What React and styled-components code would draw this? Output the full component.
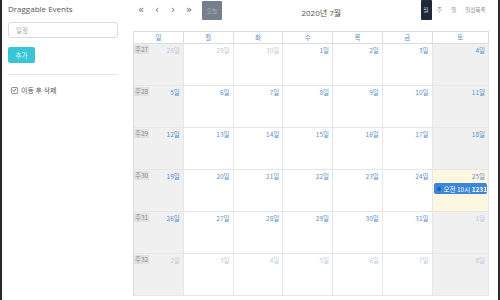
import React from "react";
import styled, { createGlobalStyle } from "styled-components";

const Global = createGlobalStyle`
  html, body { margin: 0; padding: 0; background: #fff; }
  body { font-family: "Open Sans", "Noto Sans CJK KR", sans-serif; }
  * { box-sizing: border-box; }
`;

const Frame = styled.div`
  width: 500px;
  height: 300px;
  display: flex;
  border-left: 2px solid #2a2a2a;
  border-right: 2px solid #2a2a2a;
  overflow: hidden;
  font-family: "Open Sans", "Noto Sans CJK KR", sans-serif;
`;

const Sidebar = styled.aside`
  width: 116px;
  padding-left: 6px;
  flex-shrink: 0;
  display: flex;
  flex-direction: column;
`;

const SideTitle = styled.div`
  font-size: 8px;
  color: #555;
  margin-top: 3px;
  height: 12px;
  line-height: 12px;
`;

const Input = styled.input`
  margin-top: 7px;
  width: 110px;
  height: 16px;
  border: 1px solid #dcdcdc;
  border-radius: 3px;
  padding: 0 7px;
  font-size: 6.5px;
  font-family: "Noto Sans CJK KR", sans-serif;
  &::placeholder { color: #aaa; }
  outline: none;
`;

const AddButton = styled.button`
  margin-top: 9px;
  width: 27px;
  height: 16px;
  border: none;
  border-radius: 2px;
  background: #38c6d6;
  color: #eafcff;
  font-size: 6.5px;
  font-family: "Noto Sans CJK KR", sans-serif;
  padding: 0;
`;

const Divider = styled.hr`
  margin: 11px 0 0 0;
  width: 110px;
  border: none;
  border-top: 1px solid #e6e6e6;
`;

const CheckRow = styled.label`
  margin-top: 10px;
  display: flex;
  align-items: center;
  gap: 3px;
  padding-left: 3px;
  font-size: 7px;
  color: #555;
  font-family: "Noto Sans CJK KR", sans-serif;
`;

const CheckBox = styled.span`
  width: 7px;
  height: 7px;
  border: 1px solid #999;
  border-radius: 1px;
  display: inline-flex;
  align-items: center;
  justify-content: center;
  background: #fff;
`;

const Calendar = styled.section`
  margin-left: 15px;
  width: 356px;
  flex-shrink: 0;
  display: flex;
  flex-direction: column;
`;

const Toolbar = styled.div`
  height: 31px;
  display: flex;
  justify-content: space-between;
  align-items: flex-start;
`;

const Group = styled.div`
  display: flex;
  align-items: flex-start;
`;

const NavButton = styled.button`
  width: 16px;
  height: 20px;
  border: none;
  background: transparent;
  color: #666;
  font-size: 10px;
  padding: 0;
  line-height: 16px;
  font-family: "DejaVu Sans", sans-serif;
`;

const TodayButton = styled.button`
  margin-left: 5px;
  margin-top: 1px;
  width: 20px;
  height: 19px;
  border: none;
  border-radius: 1px;
  background: #76808c;
  color: #a9b1bb;
  font-size: 6px;
  padding: 0;
  font-family: "Noto Sans CJK KR", sans-serif;
`;

const Title = styled.div`
  margin-top: 7px;
  font-size: 8px;
  color: #555;
  font-family: "Open Sans", "Noto Sans CJK KR", sans-serif;
`;

const ViewButton = styled.button`
  height: 20px;
  padding: 4px ${(p) => (p.$active ? "3px" : "3.5px")} 0;
  margin-left: ${(p) => (p.$first ? "0" : "2px")};
  border: none;
  border-radius: 1px;
  background: ${(p) => (p.$active ? "#1f2a38" : "transparent")};
  color: ${(p) => (p.$active ? "#cfd6de" : "#888")};
  font-size: 5.5px;
  line-height: 12px;
  font-family: "Noto Sans CJK KR", sans-serif;
  display: flex;
  align-items: flex-start;
`;

const Grid = styled.div`
  display: grid;
  grid-template-columns: repeat(7, 1fr);
  grid-template-rows: 12px repeat(6, 42px);
  border-top: 1px solid #ddd;
  border-left: 1px solid #ddd;
`;

const Dow = styled.div`
  border-right: 1px solid #ddd;
  border-bottom: 1px solid #ddd;
  text-align: center;
  font-size: 6.5px;
  line-height: 11px;
  color: #5b8fc8;
  font-family: "Noto Sans CJK KR", sans-serif;
  background: #fff;
`;

const Cell = styled.div`
  border-right: 1px solid #e6e6e6;
  border-bottom: 1px solid #e6e6e6;
  background: ${(p) => (p.$today ? "#fbf7e1" : p.$weekend ? "#f0f0f0" : "#fff")};
  display: flex;
  flex-direction: column;
  align-items: stretch;
`;

const CellTop = styled.div`
  display: flex;
  justify-content: space-between;
  align-items: flex-start;
  height: 11px;
`;

const WeekNo = styled.span`
  margin-top: 1px;
  background: #e2e2e2;
  color: #8a8a8a;
  font-size: 6.5px;
  line-height: 9px;
  padding: 0 1px;
  font-family: "Noto Sans CJK KR", sans-serif;
`;

const DayNum = styled.span`
  margin-left: auto;
  padding: 2px 3px 0 0;
  font-size: 6.5px;
  line-height: 8px;
  color: ${(p) => (p.$other ? "#b9cce2" : "#5b8fc8")};
  font-family: "Noto Sans CJK KR", sans-serif;
`;

const Event = styled.div`
  margin: 2px 1px 0 1px;
  height: 11px;
  background: #3b86d8;
  border-radius: 2px;
  display: flex;
  align-items: center;
  gap: 3px;
  padding-left: 3px;
  color: #fff;
  font-size: 6.5px;
  white-space: nowrap;
  overflow: hidden;
  font-family: "Noto Sans CJK KR", sans-serif;
`;

const Dot = styled.span`
  width: 4px;
  height: 4px;
  border-radius: 50%;
  background: #1d5fa8;
  flex-shrink: 0;
`;

const dows = ["일", "월", "화", "수", "목", "금", "토"];

const weeks = [
  { no: 27, days: [[28, 1], [29, 1], [30, 1], [1], [2], [3], [4]] },
  { no: 28, days: [[5], [6], [7], [8], [9], [10], [11]] },
  { no: 29, days: [[12], [13], [14], [15], [16], [17], [18]] },
  { no: 30, days: [[19], [20], [21], [22], [23], [24], [25, 0, 1]] },
  { no: 31, days: [[26], [27], [28], [29], [30], [31], [1, 1]] },
  { no: 32, days: [[2, 1], [3, 1], [4, 1], [5, 1], [6, 1], [7, 1], [8, 1]] },
];

export default function App() {
  return (
    <>
      <Global />
      <Frame>
        <Sidebar>
          <SideTitle>Draggable Events</SideTitle>
          <Input placeholder="일정" />
          <AddButton>추가</AddButton>
          <Divider />
          <CheckRow>
            <CheckBox>
              <svg width="6" height="6" viewBox="0 0 6 6">
                <path d="M1 3.2 L2.4 4.6 L5 1.4" stroke="#444" strokeWidth="0.9" fill="none" />
              </svg>
            </CheckBox>
            이동 후 삭제
          </CheckRow>
        </Sidebar>
        <Calendar>
          <Toolbar>
            <Group>
              <NavButton>«</NavButton>
              <NavButton>‹</NavButton>
              <NavButton>›</NavButton>
              <NavButton>»</NavButton>
              <TodayButton>오늘</TodayButton>
            </Group>
            <Title>2020년 7월</Title>
            <Group>
              <ViewButton $active $first>월</ViewButton>
              <ViewButton>주</ViewButton>
              <ViewButton>일</ViewButton>
              <ViewButton>일정목록</ViewButton>
            </Group>
          </Toolbar>
          <Grid>
            {dows.map((d) => (
              <Dow key={d}>{d}</Dow>
            ))}
            {weeks.map((w) =>
              w.days.map(([n, other, today], i) => (
                <Cell key={`${w.no}-${i}`} $weekend={i === 0 || i === 6} $today={!!today}>
                  <CellTop>
                    {i === 0 && <WeekNo>주{w.no}</WeekNo>}
                    <DayNum $other={!!other}>{n}일</DayNum>
                  </CellTop>
                  {today && (
                    <Event>
                      <Dot />
                      <span>
                        오전 10시 <b>1231</b>
                      </span>
                    </Event>
                  )}
                </Cell>
              ))
            )}
          </Grid>
        </Calendar>
      </Frame>
    </>
  );
}
